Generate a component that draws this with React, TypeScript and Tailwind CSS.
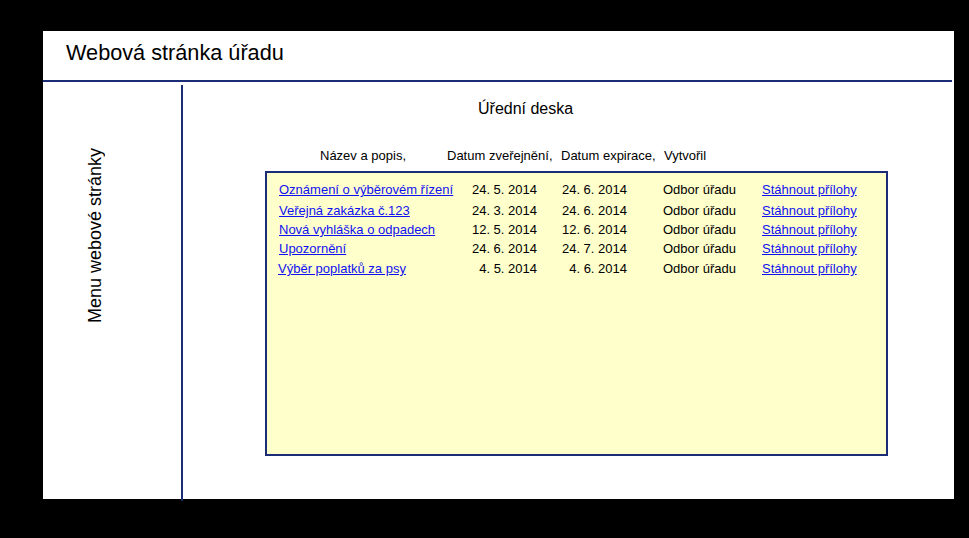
const rows = [
  { title: "Oznámení o výběrovém řízení", published: "24. 5. 2014", expires: "24. 6. 2014", space: "mt-[9px]", indent: "pl-[12px]" },
  { title: "Veřejná zakázka č.123", published: "24. 3. 2014", expires: "24. 6. 2014", space: "mt-[6px]", indent: "pl-[12px]" },
  { title: "Nová vyhláška o odpadech", published: "12. 5. 2014", expires: "12. 6. 2014", space: "mt-[4px]", indent: "pl-[12px]" },
  { title: "Upozornění", published: "24. 6. 2014", expires: "24. 7. 2014", space: "mt-[4px]", indent: "pl-[12px]" },
  { title: "Výběr poplatků za psy", published: "4. 5. 2014", expires: "4. 6. 2014", space: "mt-[5px]", indent: "pl-[11px]" },
];

export default function App() {
  return (
    <div className="h-[538px] w-[969px] bg-black pl-[43px] pt-[31px] font-['Liberation_Sans',Arial,sans-serif] text-black">
      <div className="flex h-[468px] w-[911px] flex-col bg-white">
        <header className="h-[49px] shrink-0 pl-[23px] pt-[9px] text-[21.7px] leading-[25px]">
          Webová stránka úřadu
        </header>
        <div className="mr-[2px] h-[2px] shrink-0 bg-[#1c2d78]" />

        <div className="flex flex-1">
          <aside className="w-[138px] shrink-0 pl-[42px] pt-[66px]">
            <div className="rotate-180 text-[18px] leading-[20px] [writing-mode:vertical-rl]">
              Menu webové stránky
            </div>
          </aside>
          <div className="mt-[3px] h-[416px] w-[2px] shrink-0 bg-[#1c2d78]" />

          <main className="flex-1 pt-[18px]">
            <h2 className="pl-[295px] text-[16px] leading-[18px]">Úřední deska</h2>

            <div className="mt-[30px] flex pl-[137px] text-[13px] leading-[15px]">
              <span className="w-[127px]">Název a popis,</span>
              <span className="w-[114px]">Datum zveřejnění,</span>
              <span className="w-[103px]">Datum expirace,</span>
              <span>Vytvořil</span>
            </div>

            <div className="ml-[82px] mt-[8px] h-[285px] w-[623px] border-2 border-[#1c2d78] bg-[#ffffcc] text-[13px] leading-[15px]">
              {rows.map((row) => (
                <div key={row.title} className={`flex ${row.space}`}>
                  <div className={`w-[202px] ${row.indent}`}>
                    <a href="#" className="text-[#1010f0] underline">{row.title}</a>
                  </div>
                  <div className="w-[68px] text-right">{row.published}</div>
                  <div className="w-[90px] text-right">{row.expires}</div>
                  <div className="w-[135px] pl-[36px]">Odbor úřadu</div>
                  <div>
                    <a href="#" className="text-[#1010f0] underline">Stáhnout přílohy</a>
                  </div>
                </div>
              ))}
            </div>
          </main>
        </div>
      </div>
    </div>
  );
}
